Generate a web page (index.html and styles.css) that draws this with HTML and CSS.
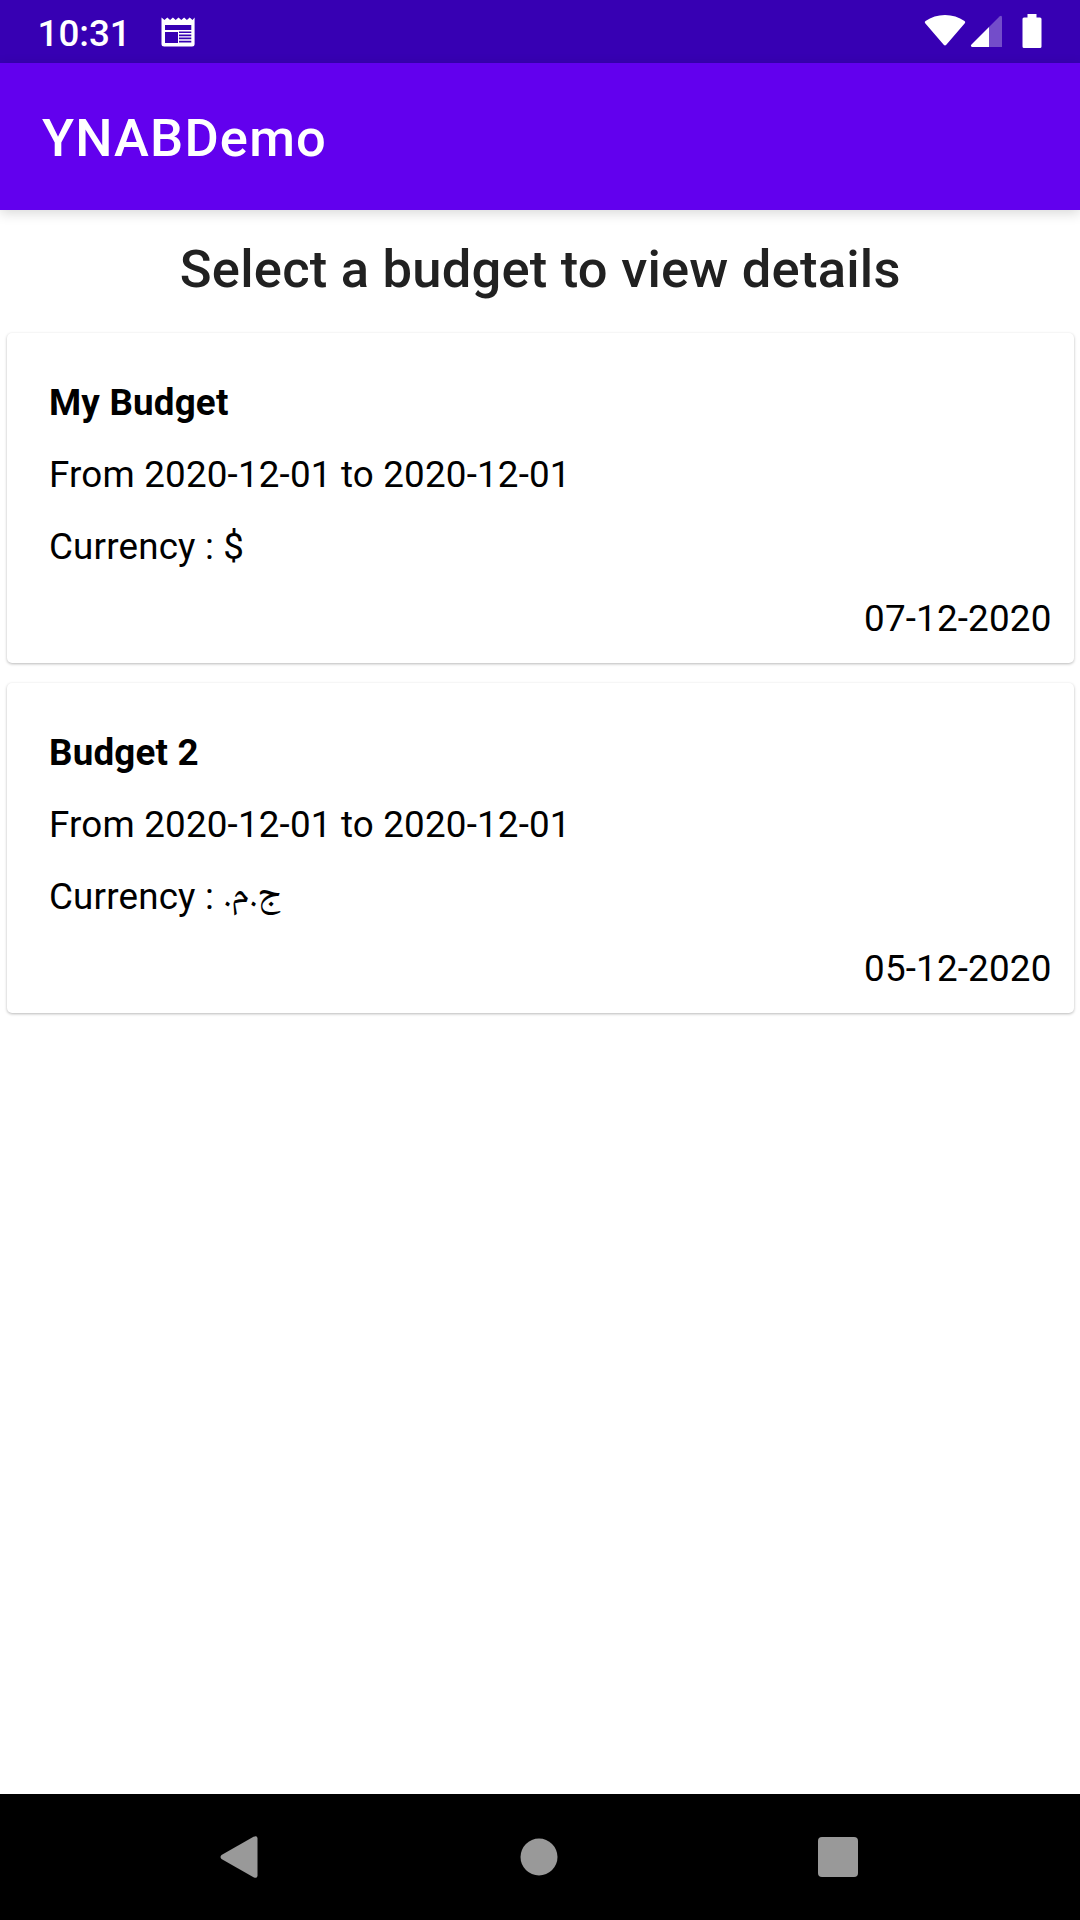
FILE: index.html
```html
<!DOCTYPE html>
<html lang="en">
<head>
<meta charset="utf-8">
<title>YNABDemo</title>
<link rel="stylesheet" href="styles.css">
</head>
<body>
<div class="screen">
  <div class="status-bar">
    <span class="clock">10:31</span>
    <svg class="icon-news" width="36" height="32" viewBox="0 0 36 32">
      <path fill="#fff" fill-rule="evenodd" d="M.5 1.500L3.500 4 6.300 1.500 9.100 4 11.900 1.500 14.700 4 17.500 1.500 20.300 4 23.100 1.500 25.900 4 28.700 1.500 31.500 4 33.600 1.500V28Q33.600 30.500 31 30.500H3.200Q.5 30.500 .5 28ZM4 9V14H30.300V9ZM4 16V27H17V16ZM18 15.500V17H30.300V15.500ZM18 18.500V20.200H30.300V18.500ZM18 21.600V23.200H30.300V21.600ZM18 24.800V26.400H30.300V24.800Z"/>
    </svg>
    <div class="indicators">
      <svg width="42" height="34" viewBox="0 0 42 34"><path fill="#fff" d="M1.200 9.200Q.1 8 1.500 7Q10 1 21 1T40.500 7Q41.900 8 40.800 9.200L22.300 30.700Q21 32.200 19.700 30.700Z"/></svg>
      <svg width="32" height="34" viewBox="0 0 32 34"><path fill="#fff" fill-opacity=".3" d="M19 14L29.500 3.500Q32 1.500 32 4.500V34H19Z"/><path fill="#fff" d="M19 14V34H2Q0 33 1.500 31.500Z"/></svg>
      <svg width="20" height="34" viewBox="0 0 20 34"><path fill="#fff" d="M5.500 0H14.500V3.500H18Q19.500 3.500 19.500 5V32.500Q19.500 34 18 34H2Q.5 34 .5 32.500V5Q.5 3.500 2 3.500H5.500Z"/></svg>
    </div>
  </div>
  <header class="app-bar"><span class="app-title">YNABDemo</span></header>
  <main class="content">
    <h1 class="heading">Select a budget to view details</h1>
    <section class="card">
      <h2 class="name">My Budget</h2>
      <p class="line">From 2020-12-01 to 2020-12-01</p>
      <p class="line">Currency : $</p>
      <p class="line modified">07-12-2020</p>
    </section>
    <section class="card">
      <h2 class="name">Budget 2</h2>
      <p class="line">From 2020-12-01 to 2020-12-01</p>
      <p class="line">Currency : <bdi class="arabic" dir="rtl" lang="ar">ج.م.</bdi></p>
      <p class="line modified">05-12-2020</p>
    </section>
  </main>
  <nav class="nav-bar">
    <svg width="38" height="42" viewBox="0 0 38 42"><path fill="#999" d="M1.500 19L33.500 .8Q37.500-1 37.500 2.500V39.500Q37.500 43 33.500 41.200L1.500 23Q-.5 21 1.500 19Z"/></svg>
    <svg width="38" height="38" viewBox="0 0 38 38"><circle cx="19" cy="19" r="18.500" fill="#999"/></svg>
    <svg width="40" height="40" viewBox="0 0 40 40"><rect width="40" height="40" rx="4" fill="#999"/></svg>
  </nav>
</div>
</body>
</html>
```
FILE: styles.css
```css
* { box-sizing: border-box; margin: 0; padding: 0; }
body { background: #fff; font-family: Roboto, sans-serif; color: #000; }
svg { display: block; flex: none; }
.screen { display: flex; flex-direction: column; width: 1080px; height: 1920px; overflow: hidden; }
.status-bar { display: flex; align-items: flex-start; height: 63px; padding: 0 38.5px 0 37.5px; background: #3700b3; color: #fff; }
.clock { width: 123.5px; padding-top: 12px; font-size: 36.75px; line-height: 44px; font-weight: 500; }
.icon-news { margin-top: 16px; }
.indicators { display: flex; margin: 14px 0 0 auto; }
.indicators svg:nth-child(2) { margin: -1px 19.5px 0 4.5px; }
.app-bar { display: flex; align-items: center; height: 147px; padding: 3px 0 0 42px; background: #6200ee; color: #fff; box-shadow: 0 3px 12px rgba(0, 0, 0, .16); }
.app-title { font-size: 52.5px; line-height: 62px; font-weight: 500; letter-spacing: 1.17px; }
.content { display: flex; flex: 1; flex-direction: column; gap: 20px; padding: 0 6.5px 0 7px; }
.heading { height: 103px; padding-top: 28px; font-size: 52.5px; line-height: 62px; font-weight: 500; letter-spacing: .22px; text-align: center; color: #212121; }
.card { height: 330px; padding: 34px 22px 0 42px; border-radius: 5px; background: #fff; box-shadow: 0 1px 3px rgba(0, 0, 0, .28); }
.name, .line { height: 72px; font-size: 36.75px; line-height: 72px; font-weight: 400; letter-spacing: .19px; }
.name { font-weight: 700; }
.modified { text-align: right; }
.arabic { display: inline-block; height: 72px; font-family: "Noto Naskh Arabic", serif; font-size: 37.5px; line-height: 72px; letter-spacing: 0; vertical-align: top; margin-top: -1px; }
.nav-bar { display: flex; align-items: center; justify-content: space-between; height: 126px; padding: 0 222px 0 219.5px; background: #000; }
.nav-bar svg:nth-child(2) { margin-left: 3px; }
```
